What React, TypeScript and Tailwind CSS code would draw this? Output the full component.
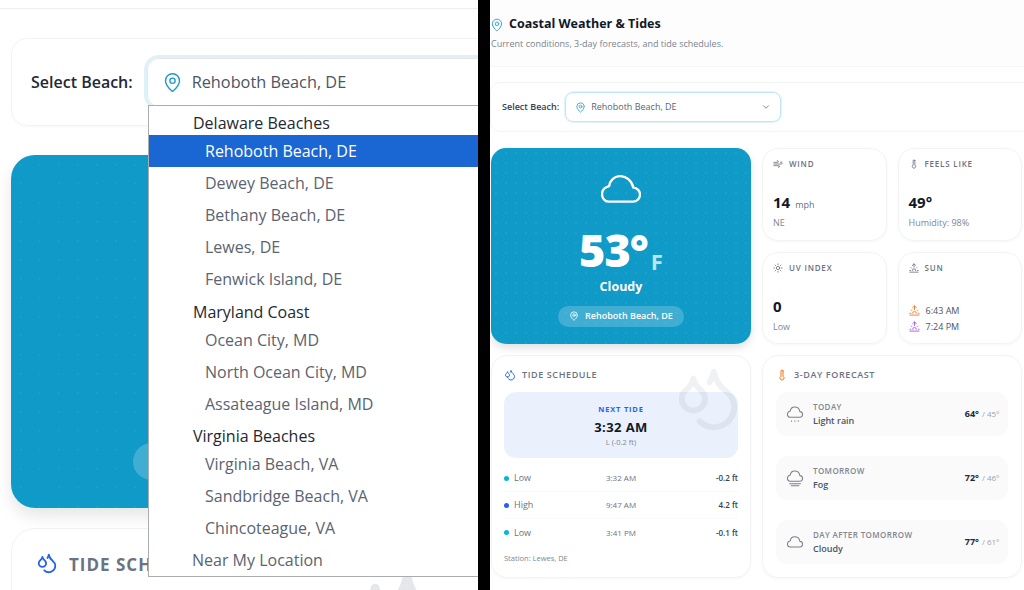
import { MapPin, ChevronDown, Wind, Thermometer, Sun, Sunrise, Droplets } from "lucide-react";

const dots = "bg-[#0f9ac7] bg-[radial-gradient(rgba(255,255,255,0.06)_1px,transparent_1px)]";
const cloudPath = "M20 78H92a21 21 0 0 0 2-42C90 15 72 2 55 2C38 2 25 14 22 32C8 36 1 46 1 56C1 68 10 78 20 78Z";

function CloudIcon({ w, extra, className }: { w: number; extra?: "rain" | "fog"; className?: string }) {
  const h = extra ? 115 : 80;
  return (
    <svg width={w} height={(w * h) / 115} viewBox={`-2 0 119 ${h}`} fill="none" stroke="currentColor" strokeWidth={w > 30 ? 7 : 8} strokeLinecap="round" strokeLinejoin="round" className={className}>
      <path d={cloudPath} />
      {extra === "rain" && <path d="M32 104v3M57 104v3M82 104v3" />}
      {extra === "fog" && <path d="M18 96H98M30 112H86" />}
    </svg>
  );
}

function Dropdown() {
  const groups = [
    ["Delaware Beaches", ["Rehoboth Beach, DE", "Dewey Beach, DE", "Bethany Beach, DE", "Lewes, DE", "Fenwick Island, DE"]],
    ["Maryland Coast", ["Ocean City, MD", "North Ocean City, MD", "Assateague Island, MD"]],
    ["Virginia Beaches", ["Virginia Beach, VA", "Sandbridge Beach, VA", "Chincoteague, VA"]],
  ] as [string, string[]][];
  return (
    <div className="absolute left-[148px] top-[105px] h-[472px] w-[340px] border border-[#a9adb3] bg-white text-[16px] leading-[24px]">
      {groups.map(([g, items]) => (
        <div key={g}>
          <div className={`pl-[44px] font-medium text-[#24292f] ${g === "Virginia Beaches" ? "h-[28px] pt-[4px]" : "h-[29px] pt-[5px]"}`}>{g}</div>
          {items.map((t) => (
            <div key={t} className={`flex h-[32px] items-center pl-[56px] ${t === "Rehoboth Beach, DE" ? "bg-[#1a66d2] text-white" : "text-[#5b6470]"}`}>{t}</div>
          ))}
        </div>
      ))}
      <div className="flex h-[32px] items-center pl-[43px] text-[#5b6470]">Near My Location</div>
    </div>
  );
}

function LeftPanel() {
  return (
    <div className="relative h-[590px] w-[478px] shrink-0 overflow-hidden bg-white">
      <div className="h-[9px] border-b border-[#eceef1]" />
      <div className="pl-[11px] pt-[29px]">
        <div className="flex h-[88px] w-[600px] items-center gap-[14px] rounded-[16px] border border-[#f1f3f5] pl-[19px] shadow-[0_1px_3px_rgba(0,0,0,0.03)]">
          <span className="text-[16px] font-semibold text-[#1f2937]">Select Beach:</span>
          <div className="flex h-[49px] flex-1 items-center rounded-[12px] border border-[#e5e7eb] pl-[14px] shadow-[0_0_0_3px_#def1f9]">
            <MapPin size={21} strokeWidth={1.6} className="text-[#1e9bcb]" />
            <span className="ml-[9px] text-[16.3px] text-[#4b5563]">Rehoboth Beach, DE</span>
          </div>
        </div>
        <div className={`relative mt-[29px] h-[353px] w-[600px] rounded-[24px] bg-[size:19px_19px] shadow-[0_8px_16px_rgba(0,0,0,0.1)] ${dots}`}>
          <div className="absolute left-[122px] top-[288px] h-[37px] w-[100px] rounded-full bg-white/20" />
        </div>
        <div className="mt-[20px] flex h-[100px] w-[600px] gap-[11px] rounded-[24px] border border-[#f1f3f5] pl-[24px] pt-[23px]">
          <Droplets size={22} className="text-[#2563eb]" />
          <span className="text-[17px] font-bold leading-[26px] tracking-[1px] text-[#6b7280]">TIDE SCHEDULE</span>
        </div>
      </div>
      <Droplets size={110} className="absolute left-[343px] top-[564px] text-[#e5e7eb]" />
      <Dropdown />
    </div>
  );
}

function Stat({ icon, label, children }: { icon: React.ReactNode; label: string; children: React.ReactNode }) {
  return (
    <div className="flex h-[92.5px] flex-col rounded-[16px] border border-[#f1f3f5] px-[10px] pt-[9px] shadow-[0_1px_3px_rgba(0,0,0,0.04)]">
      <div className="flex h-[12px] items-center gap-[6px] text-[8px] font-semibold tracking-[0.8px] text-[#6b7280]">{icon}{label}</div>
      {children}
    </div>
  );
}

function Tide({ c, k, t, h }: { c: string; k: string; t: string; h: string }) {
  return (
    <div className="grid h-[27px] grid-cols-3 items-center border-b border-[#f8f9fa] text-[8px] text-[#6b7280] last:border-0">
      <span className="flex items-center text-[9px]"><span className={`mr-[5px] h-[5px] w-[5px] rounded-full ${c}`} />{k}</span>
      <span className="text-center">{t}</span>
      <span className="text-right font-semibold text-[#374151]">{h}</span>
    </div>
  );
}

function Day({ icon, d, s, hi, lo }: { icon: React.ReactNode; d: string; s: string; hi: string; lo: string }) {
  return (
    <div className="flex h-[44px] items-center rounded-[12px] bg-[#fafafa] pl-[11px] pr-[8px]">
      <span className="flex w-[16px] justify-center text-[#7b818a]">{icon}</span>
      <div className="ml-[10px] flex-1">
        <div className="text-[8px] font-semibold leading-[12px] tracking-[0.4px] text-[#808793]">{d}</div>
        <div className="mt-[1px] text-[9px] font-semibold leading-[14px] text-[#4b5563]">{s}</div>
      </div>
      <span className="text-[9px] font-bold text-[#1f2937]">{hi}</span>
      <span className="ml-[3px] text-[8px] text-[#9ca3af]">/ {lo}</span>
    </div>
  );
}

function RightPanel() {
  return (
    <div className="flex h-[590px] flex-1 flex-col overflow-hidden bg-white">
      <div className="h-[67px] border-b border-[#f5f6f7] bg-[#fdfdfd] pt-[16px]">
        <div className="flex h-[17px] items-center gap-[5px]">
          <MapPin size={14} strokeWidth={1.7} className="text-[#3aa5d0]" />
          <span className="text-[12.5px] font-bold text-[#111827]">Coastal Weather &amp; Tides</span>
        </div>
        <div className="mt-[4px] pl-[1px] text-[9px] text-[#7b8390]">Current conditions, 3-day forecasts, and tide schedules.</div>
      </div>
      <div className="mt-[15px] flex h-[50px] w-[560px] items-center rounded-l-[10px] border border-[#f1f3f5] pl-[11px]">
        <span className="text-[9px] font-semibold text-[#374151]">Select Beach:</span>
        <div className="ml-[6px] flex h-[30px] w-[216px] items-center rounded-[8px] border border-[#bfe6f5] pl-[9px] pr-[9px] shadow-[0_0_0_1px_#e4f4fb]">
          <MapPin size={11} className="text-[#3aa5d0]" />
          <span className="ml-[5px] flex-1 text-[9px] text-[#5b6470]">Rehoboth Beach, DE</span>
          <ChevronDown size={10} className="text-[#6b7280]" />
        </div>
      </div>
      <div className="mt-[16px] grid grid-cols-[260px_124.5px_124.5px] grid-rows-[92.5px_92.5px] gap-[11px] pl-[1px]">
        <div className={`row-span-2 flex flex-col items-center rounded-[15px] bg-[size:10px_10px] pt-[27px] shadow-[0_4px_8px_rgba(0,0,0,0.12)] ${dots}`}>
          <CloudIcon w={40} className="text-white" />
          <div className="mt-[23px] flex h-[48px] items-end">
            <span className="text-[45px] font-extrabold leading-[48px] tracking-[-1px] text-white">53°</span>
            <span className="mb-[1px] ml-[3px] text-[22px] font-bold leading-[24px] text-[#bfe4f1]">F</span>
          </div>
          <div className="mt-[4px] text-[12.5px] font-bold text-white">Cloudy</div>
          <div className="mt-[9px] flex h-[21px] items-center gap-[6px] rounded-full bg-white/20 px-[11px] text-[9px] font-semibold text-white">
            <MapPin size={10} />Rehoboth Beach, DE
          </div>
        </div>
        <Stat icon={<Wind size={10} />} label="WIND">
          <div className="mt-[21px] flex h-[20px] items-baseline text-[15px] font-bold text-[#111827]">14<span className="ml-[5px] text-[9px] font-medium text-[#6b7280]">mph</span></div>
          <div className="mt-[5px] text-[9px] text-[#808793]">NE</div>
        </Stat>
        <Stat icon={<Thermometer size={10} />} label="FEELS LIKE">
          <div className="mt-[21px] h-[20px] text-[15px] font-bold text-[#111827]">49°</div>
          <div className="mt-[5px] text-[9px] text-[#808793]">Humidity: 98%</div>
        </Stat>
        <Stat icon={<Sun size={10} />} label="UV INDEX">
          <div className="mt-[21px] h-[20px] text-[15px] font-bold text-[#111827]">0</div>
          <div className="mt-[5px] text-[9px] text-[#808793]">Low</div>
        </Stat>
        <Stat icon={<Sunrise size={10} />} label="SUN">
          <div className="mt-[29px] flex h-[16px] items-center gap-[6px] text-[9px] font-medium text-[#4b5563]"><Sunrise size={11} className="text-[#f97316]" />6:43 AM</div>
          <div className="flex h-[16px] items-center gap-[6px] text-[9px] font-medium text-[#4b5563]"><Sunrise size={11} className="text-[#a855f7]" />7:24 PM</div>
        </Stat>
      </div>
      <div className="mt-[11px] grid grid-cols-[260px_259.5px] gap-x-[11px] pl-[1px]">
        <div className="relative h-[223px] overflow-hidden rounded-[16px] border border-[#f1f3f5] px-[12px] pt-[12px] shadow-[0_1px_3px_rgba(0,0,0,0.04)]">
          <div className="flex h-[13px] items-center gap-[6px] text-[9px] font-semibold tracking-[0.6px] text-[#6b7280]">
            <Droplets size={12} className="text-[#2563eb]" />TIDE SCHEDULE
          </div>
          <div className="mt-[11px] flex h-[66px] flex-col items-center rounded-[12px] bg-[#eaf1fc] pt-[12px]">
            <div className="text-[7.5px] font-bold leading-[10px] tracking-[0.8px] text-[#2563eb]">NEXT TIDE</div>
            <div className="mt-[4px] text-[13px] font-bold leading-[18px] tracking-[0.4px] text-[#111827]">3:32 AM</div>
            <div className="text-[7.5px] leading-[12px] text-[#808793]">L (-0.2 ft)</div>
          </div>
          <Droplets size={70} strokeWidth={2} className="absolute left-[181px] top-[7px] text-[#64748b]/10" />
          <div className="mt-[7px]">
            <Tide c="bg-[#06b6d4]" k="Low" t="3:32 AM" h="-0.2 ft" />
            <Tide c="bg-[#2563eb]" k="High" t="9:47 AM" h="4.2 ft" />
            <Tide c="bg-[#06b6d4]" k="Low" t="3:41 PM" h="-0.1 ft" />
          </div>
          <div className="mt-[7px] text-[7.5px] text-[#808793]">Station: Lewes, DE</div>
        </div>
        <div className="h-[223px] rounded-[16px] border border-[#f1f3f5] px-[13px] pt-[12px] shadow-[0_1px_3px_rgba(0,0,0,0.04)]">
          <div className="flex h-[13px] items-center gap-[6px] text-[9px] font-semibold tracking-[0.6px] text-[#6b7280]">
            <Thermometer size={12} className="text-[#f97316]" />3-DAY FORECAST
          </div>
          <div className="mt-[11px] flex flex-col gap-[20px]">
            <Day icon={<CloudIcon w={17} extra="rain" />} d="TODAY" s="Light rain" hi="64°" lo="45°" />
            <Day icon={<CloudIcon w={17} extra="fog" />} d="TOMORROW" s="Fog" hi="72°" lo="46°" />
            <Day icon={<CloudIcon w={17} />} d="DAY AFTER TOMORROW" s="Cloudy" hi="77°" lo="61°" />
          </div>
        </div>
      </div>
    </div>
  );
}

export default function App() {
  return (
    <div className="flex h-[590px] w-[1024px] overflow-hidden bg-black font-['Open_Sans',sans-serif]">
      <LeftPanel />
      <div className="w-[12px] shrink-0" />
      <RightPanel />
    </div>
  );
}
